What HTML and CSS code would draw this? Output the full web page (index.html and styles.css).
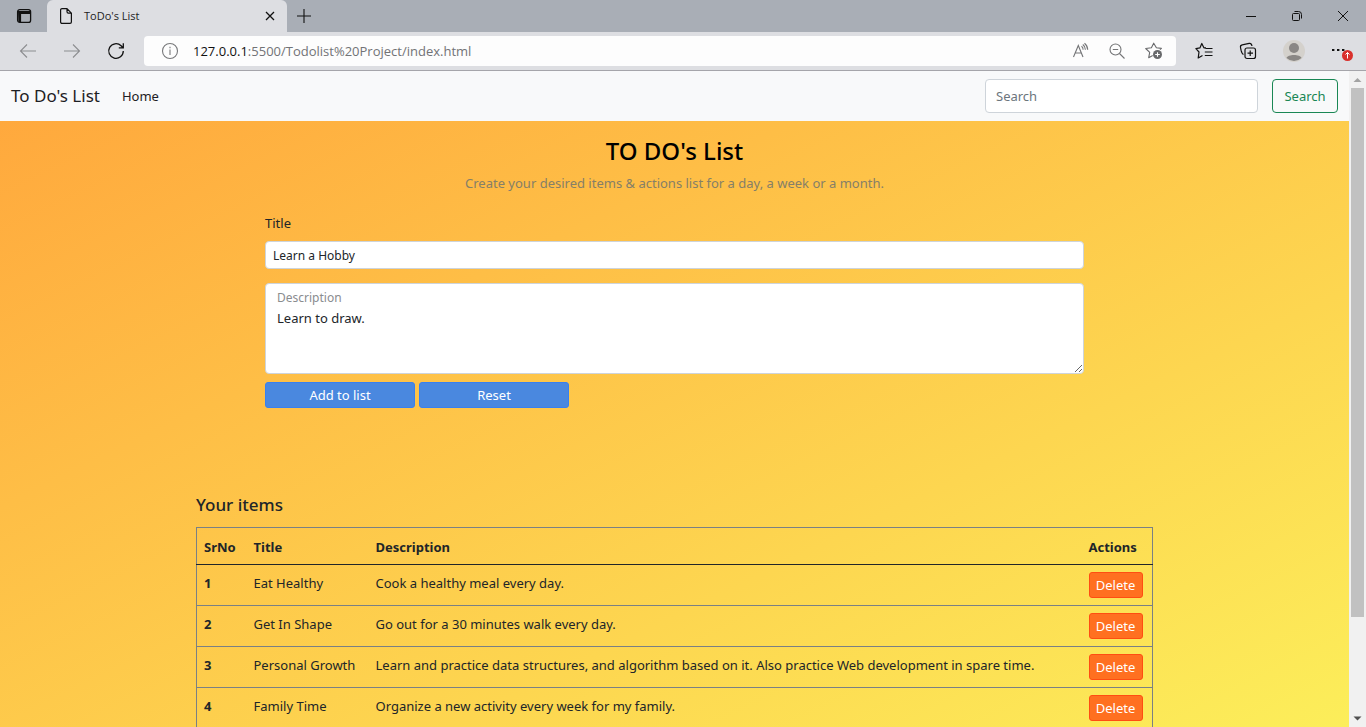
FILE: index.html
```html
<!DOCTYPE html>
<html lang="en">
<head>
<meta charset="utf-8">
<meta name="viewport" content="width=device-width, initial-scale=1">
<title>ToDo's List</title>
<link rel="stylesheet" href="styles.css">
</head>
<body>
<header class="browser">
  <div class="tabstrip">
    <button class="tab-menu" aria-label="Tab actions">
      <svg width="16" height="16" viewBox="0 0 16 16" fill="none" stroke="#111" stroke-width="1.3"><rect x="1.6" y="1.6" width="13" height="12.8" rx="2.2"/><path d="M2 3h12.2v2.6H5V14H2.4z" fill="#111" stroke="none"/><path d="M5 5.5h9.5M4.6 5v9.4" stroke-width="1"/></svg>
    </button>
    <div class="tab">
      <svg width="14" height="18" viewBox="0 0 14 18" fill="none" stroke="#111" stroke-width="1.2" stroke-linejoin="round"><path d="M8 1.6H3a1.4 1.4 0 0 0-1.4 1.4v12A1.4 1.4 0 0 0 3 16.4h8a1.4 1.4 0 0 0 1.4-1.4V6.1zM8 1.6v3.1a1.4 1.4 0 0 0 1.4 1.4h3"/></svg>
      <span class="tab-title">ToDo's List</span>
      <button aria-label="Close tab"><svg width="10" height="10" viewBox="0 0 10 10" stroke="#111" stroke-width="1.3"><path d="M1 1l8 8M9 1L1 9"/></svg></button>
    </div>
    <button class="new-tab" aria-label="New tab"><svg width="16" height="16" viewBox="0 0 16 16" stroke="#111" stroke-width="1.1"><path d="M8 1v14M1 8h14"/></svg></button>
    <div class="window-controls">
      <button aria-label="Minimize"><svg width="12" height="12" viewBox="0 0 12 12" stroke="#111"><path d="M1 6.5h10"/></svg></button>
      <button aria-label="Restore"><svg width="12" height="12" viewBox="0 0 12 12" fill="none" stroke="#111"><rect x="1.5" y="3.5" width="7" height="7" rx="1"/><path d="M3.5 1.5h4a3 3 0 0 1 3 3v4"/></svg></button>
      <button aria-label="Close"><svg width="12" height="12" viewBox="0 0 12 12" stroke="#111"><path d="M1 1l10 10M11 1L1 11"/></svg></button>
    </div>
  </div>
  <div class="toolbar">
    <div class="history">
      <button aria-label="Back"><svg width="18" height="16" viewBox="0 0 18 16" fill="none" stroke="#8c8d90" stroke-width="1.1"><path d="M17 8H1.5M8 1.5L1.5 8 8 14.5"/></svg></button>
      <button aria-label="Forward"><svg width="18" height="16" viewBox="0 0 18 16" fill="none" stroke="#8c8d90" stroke-width="1.1"><path d="M1 8h15.5M10 1.5L16.500 8 10 14.500"/></svg></button>
      <button aria-label="Refresh"><svg width="18" height="18" viewBox="0 0 18 18" fill="none" stroke="#111" stroke-width="1.3"><path d="M16.300 9a7.300 7.300 0 1 1-2.200-5.200l1.700 1.700M16.300 1.300V5.800h-4.500"/></svg></button>
    </div>
    <div class="address">
      <svg width="18" height="18" viewBox="0 0 18 18" fill="none" stroke="#77787a" stroke-width="1.1"><circle cx="9" cy="9" r="7.500"/><path d="M9 7.500v5.500M9 4.800v1.500"/></svg>
      <span class="url"><span class="host">127.0.0.1</span>:5500/Todolist%20Project/index.html</span>
      <button aria-label="Read aloud"><svg width="18" height="18" viewBox="0 0 18 18" fill="none" stroke="#747577" stroke-width="1.1"><path d="M1.500 15L6.300 3.500 11 15M3 11h6.600M9.500 4.200a4 4 0 0 1 1.600 3.500M10.800 2.500a6.500 6.500 0 0 1 2.600 5.200M12.500 1.200a8.500 8.500 0 0 1 3.200 6.500"/></svg></button>
      <button aria-label="Zoom out"><svg width="18" height="18" viewBox="0 0 18 18" fill="none" stroke="#747577" stroke-width="1.100"><circle cx="7.500" cy="7.500" r="5.500"/><path d="M4.800 7.500h5.400M11.500 11.500l5 5"/></svg></button>
      <button aria-label="Add to favorites"><svg width="20" height="18" viewBox="0 0 20 18" fill="none" stroke="#68696b" stroke-width="1.100"><path d="M16 7.700l1.400-1.300-5-.7L9.700 1.200 7.400 5.700l-5.700.8 4 3.900-1 5.300 4-2.100" stroke-linejoin="round"/><circle cx="13.500" cy="12.500" r="4.500" fill="#68696b" stroke="none"/><path d="M13.500 10.200v4.600M11.200 12.500h4.600" stroke="#fff"/></svg></button>
    </div>
    <div class="tools">
      <button aria-label="Favorites"><svg width="18" height="18" viewBox="0 0 18 18" fill="none" stroke="#111" stroke-width="1.200" stroke-linejoin="round"><path d="M11 5.800H8.900L6.800 1.500 4.900 5.900l-4 .8L4 10l-.800 6 4.300-2.500M10.500 6.500h7M9.800 10h7.700M9.800 13.500h7.700"/></svg></button>
      <button aria-label="Collections"><svg width="18" height="18" viewBox="0 0 18 18" fill="none" stroke="#111" stroke-width="1.200"><rect x="6" y="6" width="10.500" height="10.500" rx="2"/><path d="M11.200 8.500v5.500M8.500 11.200H14M4.500 12.500C3 12 2.600 10.500 2.100 8.400L1.500 5.500C1.200 4 1.800 3.200 3.200 2.900l7-1.500c1.500-.3 2.300.2 2.800 2.600"/></svg></button>
      <button aria-label="Profile"><svg width="22" height="22" viewBox="0 0 22 22"><circle cx="11" cy="11" r="11" fill="#d4d1cc"/><circle cx="11" cy="8" r="5" fill="#8a8785"/><path d="M3.500 18c1-4 14-4 15 0a11 11 0 0 1-15 0" fill="#8a8785"/></svg></button>
      <button aria-label="Settings and more"><svg width="22" height="22" viewBox="0 0 22 22"><path d="M1 10h2.400M6 10h2.400M11 10h2.400" stroke="#111" stroke-width="2.200"/><circle cx="16.500" cy="15.500" r="5.500" fill="#d9302c"/><path d="M16.500 18.500v-6M14.500 14.500l2-2 2 2" fill="none" stroke="#fff"/></svg></button>
    </div>
  </div>
</header>
<div class="viewport">
  <div class="page">
    <nav class="navbar">
      <a class="brand" href="#">To Do's List</a>
      <a class="nav-link" href="#">Home</a>
      <form class="search">
        <input type="search" placeholder="Search" aria-label="Search">
        <button type="button">Search</button>
      </form>
    </nav>
    <main>
      <h1>TO DO's List</h1>
      <p class="lead">Create your desired items &amp; actions list for a day, a week or a month.</p>
      <form class="editor">
        <label class="title-label" for="title">Title</label>
        <input class="title-input" id="title" type="text" value="Learn a Hobby">
        <div class="description">
          <label for="description">Description</label>
          <textarea id="description">Learn to draw.</textarea>
        </div>
        <div class="actions">
          <button type="button">Add to list</button>
          <button type="button">Reset</button>
        </div>
      </form>
      <section class="items">
        <h2>Your items</h2>
        <table>
          <thead><tr><th class="col-no">SrNo</th><th class="col-title">Title</th><th>Description</th><th class="col-actions">Actions</th></tr></thead>
          <tbody>
            <tr><th>1</th><td>Eat Healthy</td><td>Cook a healthy meal every day.</td><td><button>Delete</button></td></tr>
            <tr><th>2</th><td>Get In Shape</td><td>Go out for a 30 minutes walk every day.</td><td><button>Delete</button></td></tr>
            <tr><th>3</th><td>Personal Growth</td><td>Learn and practice data structures, and algorithm based on it. Also practice Web development in spare time.</td><td><button>Delete</button></td></tr>
            <tr><th>4</th><td>Family Time</td><td>Organize a new activity every week for my family.</td><td><button>Delete</button></td></tr>
          </tbody>
        </table>
      </section>
    </main>
  </div>
  <div class="scrollbar" aria-hidden="true">
    <svg width="17" height="17" viewBox="0 0 17 17"><path d="M4.500 11h8l-4-4z" fill="#a3a3a3"/></svg>
    <div class="track"><div class="thumb"></div></div>
    <svg width="17" height="17" viewBox="0 0 17 17"><path d="M4.500 6.500h8l-4 4z" fill="#505050"/></svg>
  </div>
</div>
</body>
</html>
```
FILE: styles.css
```css
* { box-sizing: border-box; }

body {
  margin: 0;
  height: 100vh;
  display: flex;
  flex-direction: column;
  overflow: hidden;
  font-family: "Noto Sans", "Open Sans", sans-serif;
  font-size: 13px;
  line-height: 20px;
  color: #212529;
}

button, input, textarea { font: inherit; color: inherit; }
button { padding: 0; border: 0; background: none; }
svg { display: block; flex: none; }

/* Browser window */
.browser {
  flex: none;
  background: #dddee2;
  border-bottom: 1px solid #a5a5aa;
  font-family: "Open Sans", "Noto Sans", sans-serif;
}
.tabstrip {
  display: flex;
  height: 32px;
  background: #a9aeb6;
}
.tab-menu { width: 47px; padding: 0 15px 0 16px; }
.tab {
  display: flex;
  align-items: center;
  gap: 11px;
  width: 240px;
  padding: 0 12px;
  border-radius: 6px 6px 0 0;
  background: #dddee2;
  font-size: 11px;
  color: #222;
}
.tab-title { flex: 1; }
.new-tab { padding: 0 9px; }
.window-controls { display: flex; margin-left: auto; }
.window-controls button { width: 46px; padding: 0 17px; }

.toolbar {
  display: flex;
  align-items: center;
  height: 38px;
}
.history { display: flex; align-items: center; gap: 26px; padding: 0 19px; }
.address {
  flex: 1;
  display: flex;
  align-items: center;
  gap: 18px;
  height: 30px;
  padding: 0 12px 0 17px;
  border-radius: 4px;
  background: #fdfdfd;
}
.url { flex: 1; margin-left: -4px; font-size: 13px; color: #727376; }
.host { color: #111; }
.tools { display: flex; align-items: center; gap: 26px; padding: 0 13px 0 19px; }

/* Page area */
.viewport { flex: 1; display: flex; min-height: 0; }
.page {
  flex: 1;
  min-width: 0;
  overflow: hidden;
  background: linear-gradient(to bottom right, #ffa63c, #fcee5a);
}
.scrollbar {
  display: flex;
  flex-direction: column;
  width: 17px;
  background: #f1f1f1;
}
.track { flex: 1; padding: 0 2px; }
.thumb { height: 85%; background: #c1c1c1; }

.navbar {
  display: flex;
  align-items: center;
  height: 50px;
  padding: 0 11px;
  background: #f8f9fa;
}
.navbar a { color: #1d2023; text-decoration: none; }
.brand { margin-right: 22px; font-size: 17px; }
.nav-link { font-size: 13px; }
.search { display: flex; gap: 14px; margin-left: auto; }
.search input {
  width: 273px;
  height: 34px;
  padding: 0 10px;
  border: 1px solid #ced4da;
  border-radius: 4px;
  background: #fff;
}
.search input::placeholder { color: #6c757d; opacity: 1; }
.search button {
  width: 66px;
  height: 34px;
  border: 1px solid #198754;
  border-radius: 4px;
  color: #198754;
}

main { padding: 14px 24px 0; }
h1 {
  margin: 0 0 6px;
  font-size: 24px;
  line-height: 32px;
  font-weight: 500;
  text-align: center;
  color: #000;
}
.lead { margin: 0 0 20px; text-align: center; color: #857f68; }

.editor { max-width: 819px; margin: 0 auto; }
.title-label { display: block; margin-bottom: 8px; }
.title-input {
  display: block;
  width: 100%;
  height: 28px;
  padding: 0 7px;
  border: 1px solid #ced4da;
  border-radius: 4px;
  background: #fff;
  font-size: 12px;
}
.description {
  margin: 14px 0 8px;
  position: relative;
}
.description label {
  position: absolute;
  top: 5px;
  left: 12px;
  font-size: 12px;
  color: #8a8c8f;
}
.description textarea {
  display: block;
  width: 100%;
  height: 91px;
  padding: 24px 11px 8px;
  border: 1px solid #ced4da;
  border-radius: 4px;
  background: #fff;
}
.actions { display: flex; gap: 4px; }
.actions button {
  width: 150px;
  height: 26px;
  border: 1px solid #3880f0;
  border-radius: 3px;
  background: #4a88df;
  color: #fff;
}

.items { max-width: 957px; margin: 86px auto 0; }
h2 {
  margin: 0 0 11px;
  font-size: 17px;
  line-height: 22px;
  font-weight: 500;
}
table {
  width: 100%;
  border: 1px solid #7a8084;
  border-collapse: collapse;
}
th, td {
  padding: 7px;
  border-bottom: 1px solid #7a8084;
  text-align: left;
  vertical-align: top;
}
thead th { padding: 9px 7px 7px; border-bottom-color: #212529; }
tbody th, tbody td { padding: 8px 7px 6px; }
tbody td:last-child { padding: 7px; }
.col-no { width: 50px; }
.col-title { width: 122px; }
.col-actions { width: 71px; }
td button {
  display: block;
  width: 54px;
  height: 26px;
  border: 1px solid #ff4d12;
  border-radius: 3px;
  background: #ff7020;
  color: #fff;
}
```
